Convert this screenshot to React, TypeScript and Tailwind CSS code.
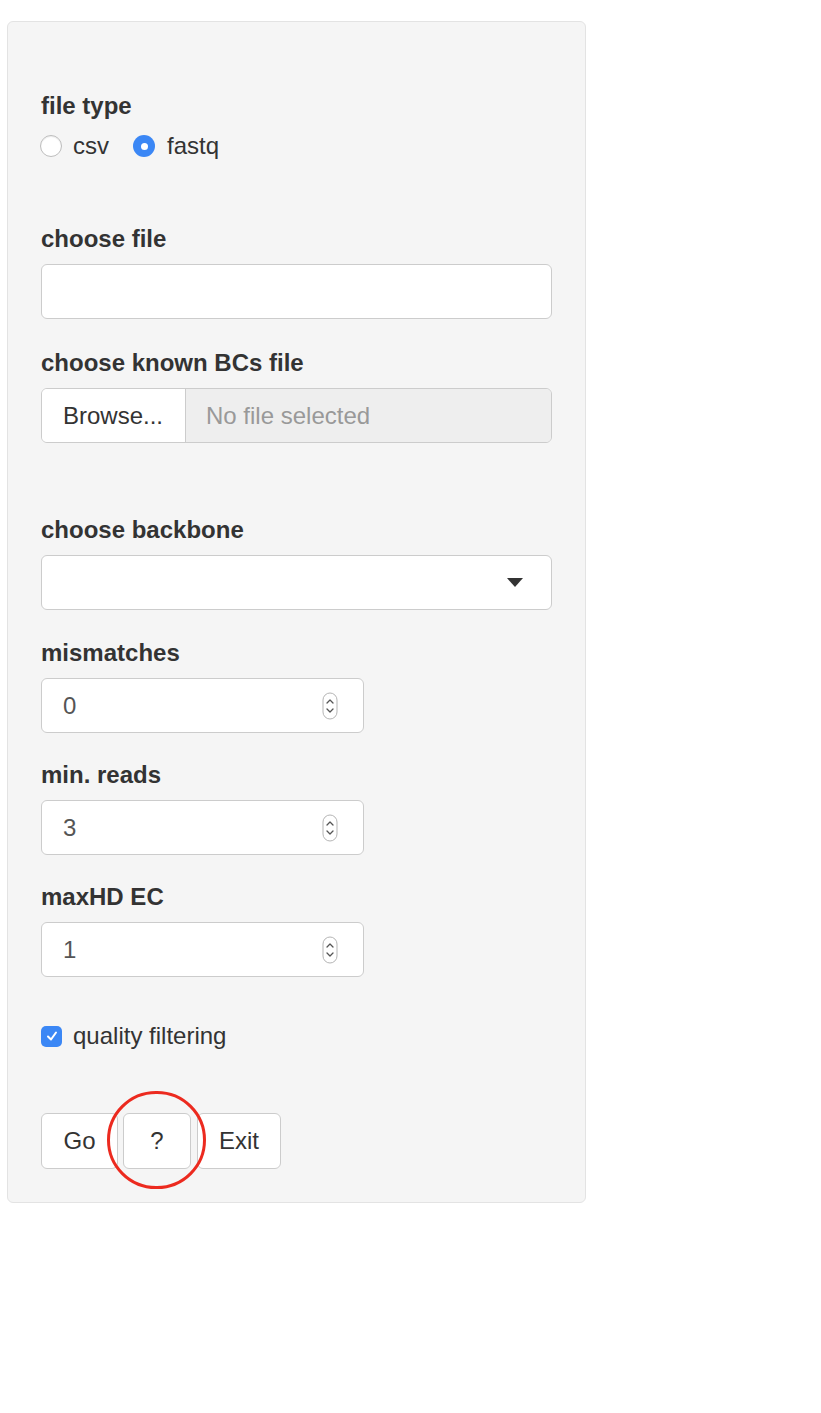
import React from "react";

function Spinner() {
  return (
    <svg width="16" height="28" viewBox="0 0 16 28" className="shrink-0">
      <rect x="1" y="1" width="14" height="26" rx="7" fill="#fff" stroke="#b5b5b5" strokeWidth="1" />
      <path d="M5 11 L8 8 L11 11" fill="none" stroke="#555" strokeWidth="1.3" strokeLinecap="round" strokeLinejoin="round" />
      <path d="M5 17 L8 20 L11 17" fill="none" stroke="#555" strokeWidth="1.3" strokeLinecap="round" strokeLinejoin="round" />
    </svg>
  );
}

function NumberInput({ value }: { value: string }) {
  return (
    <div className="mt-[10px] flex h-[55px] w-[323px] items-center justify-between rounded-[6px] border border-[#cccccc] bg-white pl-[21px] pr-[25px] text-[24px] text-[#555]">
      <span>{value}</span>
      <Spinner />
    </div>
  );
}

export default function App() {
  const label = "block text-[24px] leading-[30px] font-bold text-[#333]";
  return (
    <div
      className="min-h-[1413px] w-[821px] bg-white pt-[21px] pl-[7px]"
      style={{ fontFamily: '"Liberation Sans", Arial, Helvetica, sans-serif' }}
    >
      <div className="relative w-[579px] rounded-[6px] border border-[#e3e3e3] bg-[#f5f5f5] px-[33px] pt-[69px] pb-[33px]">
        <div className={label}>file type</div>
        <div className="mt-[10px] flex h-[30px] items-center text-[24px] text-[#333]">
          <span className="ml-[-1px] h-[22px] w-[22px] rounded-full border border-[#bdbdbd] bg-white shadow-[inset_0_1px_1px_rgba(0,0,0,0.08)]" />
          <span className="ml-[11px]">csv</span>
          <span className="ml-[24px] flex h-[22px] w-[22px] items-center justify-center rounded-full bg-[#3b87f5]">
            <span className="h-[7px] w-[7px] rounded-full bg-white" />
          </span>
          <span className="ml-[12px]">fastq</span>
        </div>

        <div className={`${label} mt-[63px]`}>choose file</div>
        <div className="mt-[10px] h-[55px] w-full rounded-[6px] border border-[#cccccc] bg-white" />

        <div className={`${label} mt-[29px]`}>choose known BCs file</div>
        <div className="mt-[10px] flex h-[55px] w-full overflow-hidden rounded-[6px] border border-[#cccccc] text-[24px]">
          <div className="flex w-[144px] items-center border-r border-[#cccccc] bg-white pl-[21px] text-[#333]">Browse...</div>
          <div className="flex flex-1 items-center bg-[#eeeeee] pl-[20px] text-[#999]">No file selected</div>
        </div>

        <div className={`${label} mt-[72px]`}>choose backbone</div>
        <div className="mt-[10px] flex h-[55px] w-full items-center justify-end rounded-[6px] border border-[#cccccc] bg-white pr-[28px]">
          <svg width="16" height="9" viewBox="0 0 16 9">
            <path d="M0 0 L16 0 L8 9 Z" fill="#333" />
          </svg>
        </div>

        <div className={`${label} mt-[28px]`}>mismatches</div>
        <NumberInput value="0" />

        <div className={`${label} mt-[27px]`}>min. reads</div>
        <NumberInput value="3" />

        <div className={`${label} mt-[27px]`}>maxHD EC</div>
        <NumberInput value="1" />

        <div className="mt-[44px] flex h-[30px] items-center text-[24px] text-[#333]">
          <span className="flex h-[21px] w-[21px] items-center justify-center rounded-[5px] bg-[#3b87f5]">
            <svg width="14" height="14" viewBox="0 0 14 14">
              <path d="M3 7.5 L6 10.5 L11 3.5" fill="none" stroke="#fff" strokeWidth="2" strokeLinecap="round" strokeLinejoin="round" />
            </svg>
          </span>
          <span className="ml-[11px]">quality filtering</span>
        </div>

        <div className="relative mt-[62px] flex h-[56px] items-stretch text-[24px] text-[#333]">
          <div className="flex w-[77px] items-center justify-center rounded-[6px] border border-[#cccccc] bg-white">Go</div>
          <div className="ml-[5px] flex w-[68px] items-center justify-center rounded-[6px] border border-[#cccccc] bg-white">?</div>
          <div className="ml-[6px] flex w-[84px] items-center justify-center rounded-[6px] border border-[#cccccc] bg-white">Exit</div>
          <div className="pointer-events-none absolute left-[66px] top-[-22px] h-[98px] w-[99px] rounded-full border-[3.5px] border-[#ec2a1f]" />
        </div>
      </div>
    </div>
  );
}
